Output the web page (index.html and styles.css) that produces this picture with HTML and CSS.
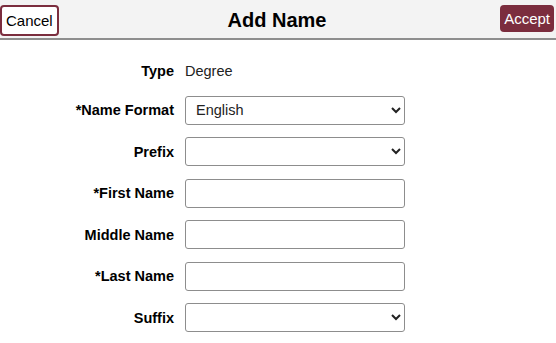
FILE: index.html
```html
<!DOCTYPE html>
<html lang="en">

<head>
  <meta charset="UTF-8" />
  <meta name="viewport" content="width=device-width, initial-scale=1.0" />
  <title>Add Name</title>
  <link rel="stylesheet" href="styles.css">
</head>

<body>
  <div class="header">
    <button class="btn btn-cancel">Cancel</button>
    <h1>Add Name</h1>
    <button class="btn btn-accept">Accept</button>
  </div>

  <form class="name-form">
    <label class="type-label">Type</label>
    <span class="value">Degree</span>

    <label for="nameFormat">*Name Format</label>
    <select id="nameFormat">
      <option>English</option>
    </select>

    <label for="prefix">Prefix</label>
    <select id="prefix">
      <option></option>
    </select>

    <label for="firstName">*First Name</label>
    <input type="text" id="firstName" />

    <label for="middleName">Middle Name</label>
    <input type="text" id="middleName" />

    <label for="lastName">*Last Name</label>
    <input type="text" id="lastName" />

    <label for="suffix">Suffix</label>
    <select id="suffix">
      <option></option>
    </select>
  </form>
</body>

</html>
```

FILE: styles.css
```css
body {
  font-family: "Liberation Sans", Arial, sans-serif;
  margin: 0;
  background: #fff;
  color: #000;
}

.header {
  display: grid;
  grid-template-columns: 1fr auto 1fr;
  align-items: start;
  height: 40px;
  padding: 5px 2px 0 0;
  box-sizing: border-box;
  background: #f3f3f3;
  border-bottom: 2px solid #8e8e8e;
}

.header h1 {
  margin: 0;
  padding-top: 3px;
  font-size: 20px;
  font-weight: bold;
  line-height: 24px;
}

.btn {
  font-family: inherit;
  font-size: 15px;
  border-radius: 4px;
  cursor: pointer;
  margin: 0;
}

.btn-cancel {
  justify-self: start;
  height: 31px;
  padding: 0 4px;
  background: #fff;
  color: #000;
  border: 2px solid #7b2d3e;
}

.btn-accept {
  justify-self: end;
  height: 27px;
  padding: 0 4px;
  background: #7b2d3e;
  color: #fff;
  border: none;
}

.name-form {
  display: grid;
  grid-template-columns: 174px 220px;
  column-gap: 11px;
  row-gap: 12.5px;
  align-items: center;
  padding-top: 14px;
}

.name-form label {
  text-align: right;
  font-size: 14.5px;
  font-weight: bold;
}

.name-form .type-label,
.name-form .value {
  height: 29px;
  box-sizing: border-box;
  padding-top: 5px;
  line-height: 24px;
}

.name-form .value {
  font-size: 14.5px;
  color: #222;
}

.name-form input,
.name-form select {
  font-family: inherit;
  font-size: 14.5px;
  height: 29px;
  box-sizing: border-box;
  border: 1px solid #8d8d8d;
  border-radius: 3px;
  background: #fff;
  padding: 0 6px;
  margin: 0;
  color: #222;
}
```
